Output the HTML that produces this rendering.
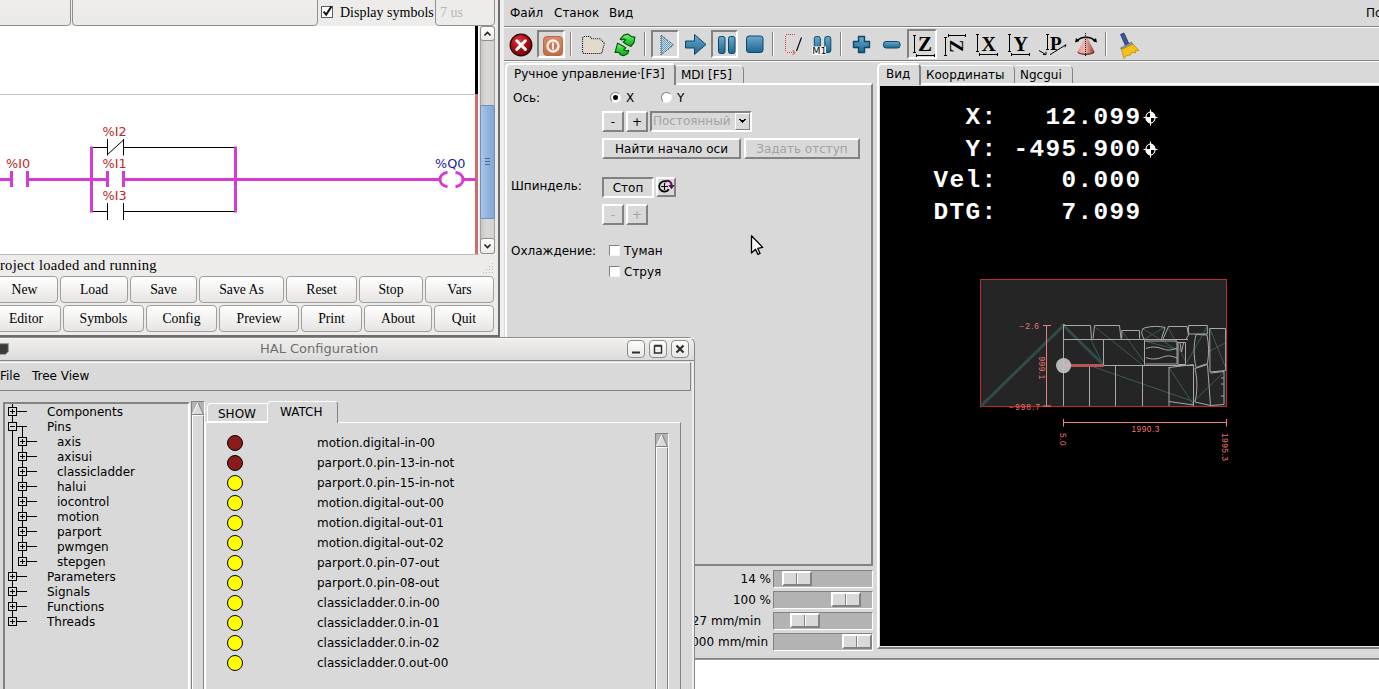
<!DOCTYPE html>
<html lang="ru">
<head>
<meta charset="utf-8">
<title>LinuxCNC</title>
<style>
html,body{margin:0;padding:0;overflow:hidden}
body{width:1379px;height:689px;overflow:hidden;position:relative;background:#d9d9d9;font:12px "DejaVu Sans","Liberation Sans",sans-serif;color:#000}
.a{position:absolute}
.t{position:absolute;white-space:pre;line-height:14px;height:14px}
/* Tk 3d borders */
.rs{position:absolute;box-sizing:border-box;border:2px solid;border-color:#fff #828282 #828282 #fff;background:#d9d9d9}
.sk{position:absolute;box-sizing:border-box;border:2px solid;border-color:#828282 #fff #fff #828282;background:#d9d9d9}
.r1{position:absolute;box-sizing:border-box;border:1px solid;border-color:#fff #828282 #828282 #fff;background:#d9d9d9}
.s1{position:absolute;box-sizing:border-box;border:1px solid;border-color:#828282 #fff #fff #828282;background:#d9d9d9}
.bt{text-align:center;line-height:18px;white-space:pre}
.dis{color:#a3a3a3}
.sep{position:absolute;width:1px;top:32px;height:24px;background:#828282;border-right:1px solid #fff}
.dro{font:bold 24.4px "Liberation Mono",monospace;letter-spacing:1.36px;color:#fff;white-space:pre;line-height:28px;height:28px}
/* GTK */
#lad{position:absolute;left:0;top:0;width:498px;height:335px;background:#edeceb;border-right:2px solid #6f6d6b;border-bottom:2px solid #6f6d6b;font:14px "Liberation Serif",serif;overflow:hidden}
.gb{position:absolute;box-sizing:border-box;height:27px;border:1px solid #a09e9b;border-radius:4px;background:linear-gradient(#ffffff,#f3f2f1 50%,#e6e4e2);text-align:center;font:13.7px "Liberation Serif",serif;line-height:25px;white-space:pre}
.gb span{display:block;line-height:25px}
.ge{position:absolute;box-sizing:border-box;border:1px solid #918f8c;border-radius:4px;background:#edeceb}
/* HAL */
#hal{position:absolute;left:0;top:337px;width:695px;height:352px;background:#d9d9d9;overflow:hidden}
.tr{position:absolute;white-space:pre;line-height:15px;height:15px}
.led{position:absolute;left:227px;width:14px;height:14px;border-radius:50%;border:1px solid #000;background:#ffff00}
.led.r{background:#8b1a1a}
.wl{position:absolute;left:317px;white-space:pre;line-height:15px}
</style>
</head>
<body>

<!-- ================= AXIS window ================= -->
<div id="axis" class="a" style="left:500px;top:0;width:879px;height:689px;background:#d9d9d9;overflow:hidden">
<!--AXIS-CONTENT-->
<!-- window left edge -->
<div class="a" style="left:0;top:0;width:4px;height:660px;background:#efefef"></div>
<!-- menubar -->
<div class="t" style="left:10px;top:6px">Файл</div>
<div class="t" style="left:54px;top:6px">Станок</div>
<div class="t" style="left:109px;top:6px">Вид</div>
<div class="t" style="left:866px;top:6px">Помощь</div>
<div class="a" style="left:4px;top:26px;width:875px;height:1px;background:#828282"></div>
<div class="a" style="left:4px;top:27px;width:875px;height:1px;background:#fff"></div>
<!-- toolbar -->
<div id="tb" class="a" style="left:0;top:0;width:879px;height:62px">
<!--TOOLBAR-->
<div class="sk" style="left:37px;top:30px;width:28px;height:28px"></div>
<div class="sk" style="left:151px;top:30px;width:28px;height:28px"></div>
<div class="sk" style="left:211px;top:30px;width:27px;height:28px"></div>
<div class="sk" style="left:407px;top:29px;width:30px;height:30px"></div>
<div class="sep" style="left:70px"></div><div class="sep" style="left:144px"></div><div class="sep" style="left:272px"></div><div class="sep" style="left:340px"></div><div class="sep" style="left:605px"></div>
<svg class="a" style="left:0;top:28px" width="879" height="32" viewBox="500 28 879 32">
<defs>
 <radialGradient id="gRed" cx="0.4" cy="0.3" r="0.8"><stop offset="0" stop-color="#dc3a42"/><stop offset="0.5" stop-color="#b00c14"/><stop offset="1" stop-color="#5c0408"/></radialGradient>
 <linearGradient id="gOr" x1="0" y1="0" x2="0" y2="1"><stop offset="0" stop-color="#d68c6b"/><stop offset="1" stop-color="#c26b49"/></linearGradient>
 <linearGradient id="gBl" x1="0" y1="0" x2="0" y2="1"><stop offset="0" stop-color="#6aaace"/><stop offset="1" stop-color="#1d6690"/></linearGradient>
 <linearGradient id="gGr" x1="0" y1="0" x2="0" y2="1"><stop offset="0" stop-color="#8af58a"/><stop offset="0.5" stop-color="#2fd03a"/><stop offset="1" stop-color="#0fa81c"/></linearGradient>
 <linearGradient id="gCone" x1="0" y1="0" x2="1" y2="0"><stop offset="0" stop-color="#e89a92"/><stop offset="0.45" stop-color="#f3b8b0"/><stop offset="1" stop-color="#8a3a36"/></linearGradient>
 <pattern id="stip" width="2" height="2" patternUnits="userSpaceOnUse"><rect width="2" height="2" fill="#d9d9d9"/><rect width="1" height="1" fill="#5a9ec6"/><rect x="1" y="1" width="1" height="1" fill="#5a9ec6"/></pattern>
 <pattern id="stipF" width="2" height="2" patternUnits="userSpaceOnUse"><rect width="2" height="2" fill="#d9d9d9"/><rect width="1" height="1" fill="#ecdcc0"/><rect x="1" y="1" width="1" height="1" fill="#ecdcc0"/></pattern>
</defs>
<!-- estop -->
<circle cx="521" cy="45" r="10.800" fill="url(#gRed)" stroke="#2e0204" stroke-width="1.300"/>
<path d="M516.800 40.800l8.600 8.600M525.400 40.800l-8.600 8.600" stroke="#fff" stroke-width="3" stroke-linecap="round"/>
<!-- power -->
<rect x="543.500" y="36.500" width="19" height="19" rx="3.500" fill="url(#gOr)" stroke="#b86844" stroke-width="1"/>
<circle cx="553" cy="46" r="5.500" fill="none" stroke="#fbeee6" stroke-width="2.400"/>
<path d="M553 42.500v7" stroke="#fbeee6" stroke-width="2"/>
<!-- folder (disabled) -->
<path d="M582.500 38l1.500-1.500h6l2 2.300h8l4 4.200v2l-1.500 4.500v2.500l-1.500 1.500h-17l-1.500-1.500z" fill="url(#stipF)" stroke="#000" stroke-width="1.100" stroke-dasharray="1 1.050"/>
<!-- reload -->
<path d="M620.200 39.200L623.700 35.100L627.800 34.100L631.300 36.600L634.900 37.100L633.900 42.700L630.800 46.500L626.300 44.200L623.200 42L625.800 39.700L623.700 38.900L621.700 39.900z" fill="url(#gGr)" stroke="#075a0c" stroke-width="1.200" stroke-linejoin="round"/>
<path d="M615.100 52.400L617.600 43.200L620.700 44.750L625.800 47.800L623.700 49.800L626.300 50.800L628.800 50.300L627.800 53.400L623.700 55.700L620.700 54.900L618.700 52.400z" fill="url(#gGr)" stroke="#075a0c" stroke-width="1.200" stroke-linejoin="round"/>
<!-- play (stippled) -->
<path d="M661 35l12.500 10-12.500 10z" fill="url(#stip)" stroke="#0d3c5c" stroke-width="1" stroke-dasharray="1 1"/>
<!-- step arrow -->
<path d="M685.500 41h9v-6.500l11.500 10-11.500 10v-6.500h-9z" fill="url(#gBl)" stroke="#0f4668" stroke-width="1" stroke-linejoin="round"/>
<!-- pause -->
<rect x="718.500" y="36.500" width="6.500" height="17" rx="2" fill="url(#gBl)" stroke="#0f4668"/>
<rect x="728.500" y="36.500" width="6.500" height="17" rx="2" fill="url(#gBl)" stroke="#0f4668"/>
<!-- stop -->
<rect x="746.500" y="36" width="16.500" height="16.500" rx="2.500" fill="url(#gBl)" stroke="#0f4668"/>
<!-- block delete -->
<path d="M795 34.500h-8.500l-1 1v16l1 1h8" fill="none" stroke="#e43c3c" stroke-width="1" stroke-dasharray="1 1" shape-rendering="crispEdges"/>
<path d="M792.500 50l2.500 2.500-2.500 2.500" fill="none" stroke="#e43c3c" stroke-width="1"/>
<path d="M796.500 51l5-13.500" stroke="#000" stroke-width="1.100"/>
<!-- M1 optional pause -->
<rect x="814.300" y="36.500" width="6" height="16" rx="2" fill="url(#gBl)" stroke="#0f4668"/>
<rect x="824.800" y="36.500" width="6" height="16" rx="2" fill="url(#gBl)" stroke="#0f4668"/>
<rect x="812" y="46.500" width="14" height="8.500" fill="#fff"/>
<text x="812.300" y="54" font-family="DejaVu Sans, Liberation Sans, sans-serif" font-size="9.500" fill="#000">M1</text>
<!-- plus / minus -->
<path d="M858.500 36.500h6v5h5v6h-5v5h-6v-5h-5v-6h5z" fill="url(#gBl)" stroke="#0f4668" stroke-linejoin="round" stroke-width="1.400"/>
<rect x="883.500" y="41.500" width="16.500" height="6.500" rx="2.500" fill="url(#gBl)" stroke="#0f4668"/>
<!-- view Z -->
<g stroke="#000" stroke-width="1" fill="none" shape-rendering="crispEdges">
 <path d="M914.500 35v18M913 35.500h3M913 52.500h3 M916 55.500h19M916.500 54v3M934.500 54v3"/>
 <path d="M945.500 37v19M944 37.500h3M944 55.500h3 M948 35.500h18M948.500 34v3M965.500 34v3"/>
 <path d="M977.500 34v18M976 34.500h3M976 51.500h3 M979 54.500h19M979.500 53v3M997.500 53v3"/>
 <path d="M1009.500 34v18M1008 34.500h3M1008 51.500h3 M1011 54.500h19M1011.500 53v3M1029.500 53v3"/>
 <path d="M1047.500 34v16M1046 34.500h3M1046 49.500h3"/>
</g>
<g stroke="#000" stroke-width="1" fill="none">
 <path d="M1039 50.500l7 4.200 M1046 54.700v-3 M1046 54.700l-3-0.300 M1050 54.700l16-10 M1066 44.700l-1 2.500"/>
</g>
<g font-family="Liberation Serif, serif" font-weight="bold" font-size="21" fill="#000">
 <text x="918" y="51">Z</text>
 <text transform="translate(950.300 39.700) rotate(90)" x="0" y="0" font-size="19">Z</text>
 <text x="981.500" y="50.500" font-size="20">X</text>
 <text x="1013.500" y="50.500" font-size="20">Y</text>
 <text x="1050" y="49.500" font-size="19">P</text>
</g>
<!-- cone -->
<ellipse cx="1086" cy="52" rx="8.500" ry="3" fill="#5a2422"/>
<path d="M1086 35l-8.300 16.500c2 3 14.600 3 16.600 0z" fill="url(#gCone)"/>
<path d="M1085.500 33v24" stroke="#000" stroke-width="1" stroke-dasharray="1 1" shape-rendering="crispEdges"/>
<path d="M1077 41c4-5 14-5 18 0" fill="none" stroke="#000" stroke-width="1.300"/>
<path d="M1075 42.500l1-4.500 3.500 3z M1097 42.500l-1-4.500-3.500 3z" fill="#000"/>
<!-- broom -->
<path d="M1120.500 34.500l3.500-1.500 5 11-3.500 1.800z" fill="#3a55a0" stroke="#22336a" stroke-width="0.800"/>
<path d="M1120.500 48l11-6 1.500 2.500-11 6z" fill="#8a93a8" stroke="#555" stroke-width="0.500"/>
<path d="M1121.500 49.500l11.500-5.500 6 6.500-4 0.500 0.500 2-4-0.500-1 2.500-4 0.500-2.500 3z" fill="#f2c21a" stroke="#b88a08" stroke-width="0.800"/>
</svg>
</div>
<div class="a" style="left:4px;top:60px;width:875px;height:1px;background:#828282"></div>
<div class="a" style="left:4px;top:61px;width:875px;height:1px;background:#fff"></div>

<!-- left notebook -->
<div class="a" style="left:5px;top:83px;width:368px;height:483px;box-sizing:border-box;border:2px solid;border-color:#fff #828282 #828282 #fff"></div>
<!-- tab 1 (selected) -->
<div class="a" style="left:5px;top:63px;width:171px;height:22px;box-sizing:border-box;border:2px solid;border-color:#fff #828282 #d9d9d9 #fff;border-bottom:0;border-radius:5px 5px 0 0;background:#d9d9d9"></div>
<div class="t" style="left:14px;top:67px">Ручное управление·[F3]</div>
<!-- tab 2 -->
<div class="a" style="left:176px;top:65px;width:68px;height:18px;box-sizing:border-box;border:1px solid;border-color:#fff #828282 transparent #d9d9d9;border-bottom:0;border-radius:0 5px 0 0"></div>
<div class="t" style="left:181px;top:68px">MDI [F5]</div>

<!-- Axis row -->
<div class="t" style="left:13px;top:91px">Ось:</div>
<div class="a" style="left:110px;top:92px;width:11px;height:11px;box-sizing:border-box;border-radius:50%;background:#fff;border:1px solid;border-color:#828282 #f4f4f4 #f4f4f4 #828282"></div>
<div class="a" style="left:113px;top:95px;width:5px;height:5px;border-radius:50%;background:#000"></div>
<div class="t" style="left:126px;top:91px">X</div>
<div class="a" style="left:161px;top:92px;width:11px;height:11px;box-sizing:border-box;border-radius:50%;background:#fff;border:1px solid;border-color:#828282 #f4f4f4 #f4f4f4 #828282"></div>
<div class="t" style="left:177px;top:91px">Y</div>
<!-- jog row -->
<div class="rs bt" style="left:102px;top:111px;width:22px;height:21px">-</div>
<div class="rs bt" style="left:126px;top:111px;width:22px;height:21px">+</div>
<div class="sk" style="left:150px;top:111px;width:102px;height:21px"></div>
<div class="t dis" style="left:153px;top:114px">Постоянный</div>
<div class="r1" style="left:235px;top:113px;width:15px;height:17px"></div>
<svg class="a" style="left:235px;top:113px" width="15" height="17"><path d="M4 6.500h7M5 7.500h5M6 8.500h3M7 9.500h1" stroke="#000" stroke-width="1" fill="none" shape-rendering="crispEdges"/><path d="M6 6.500h3" stroke="#d9d9d9" stroke-width="1" shape-rendering="crispEdges"/></svg>
<!-- home row -->
<div class="rs bt" style="left:102px;top:138px;width:139px;height:21px">Найти начало оси</div>
<div class="rs bt dis" style="left:244px;top:138px;width:116px;height:21px">Задать отступ</div>
<!-- spindle -->
<div class="t" style="left:11px;top:179px">Шпиндель:</div>
<div class="sk bt" style="left:102px;top:177px;width:52px;height:21px">Стоп</div>
<div class="rs" style="left:156px;top:177px;width:20px;height:20px"></div>
<svg class="a" style="left:156px;top:177px" width="20" height="20" viewBox="0 0 20 20"><path d="M10.500 4.600A5.200 5.200 0 1 0 12.800 12.200" fill="none" stroke="#000" stroke-width="1.800"/><path d="M8.500 6v7M5 9.500h7" stroke="#000" stroke-width="1.100"/><path d="M9.500 4.200c3.500-1.200 6.300 1 6.200 4.500" fill="none" stroke="#5a0a5a" stroke-width="2"/><path d="M12.300 8h6.400l-3.200 4.300z" fill="#5a0a5a"/></svg>
<div class="rs bt dis" style="left:102px;top:204px;width:22px;height:21px">-</div>
<div class="rs bt dis" style="left:126px;top:204px;width:22px;height:21px">+</div>
<!-- coolant -->
<div class="t" style="left:11px;top:244px">Охлаждение:</div>
<div class="a" style="left:109px;top:245px;width:11px;height:11px;box-sizing:border-box;background:#fff;border:1px solid;border-color:#828282 #f4f4f4 #f4f4f4 #828282"></div>
<div class="t" style="left:124px;top:244px">Туман</div>
<div class="a" style="left:109px;top:266px;width:11px;height:11px;box-sizing:border-box;background:#fff;border:1px solid;border-color:#828282 #f4f4f4 #f4f4f4 #828282"></div>
<div class="t" style="left:124px;top:265px">Струя</div>
<!-- mouse cursor -->
<svg class="a" style="left:250px;top:235px" width="15" height="22" viewBox="0 0 15 22"><path d="M1.500 0.700L1.500 18L5.500 14.300L7.900 19.400L10.100 18.400L7.800 13.400L12.700 12.400Z" fill="#fff" stroke="#000" stroke-width="1.300" stroke-linejoin="round"/></svg>

<!-- sliders -->
<div class="t" style="left:141px;top:572px;width:130px;text-align:right">14 %</div>
<div class="s1" style="left:273px;top:570px;width:100px;height:18px;background:#b3b3b3"></div>
<div class="rs" style="left:282px;top:571px;width:30px;height:15px"></div><div class="a" style="left:296px;top:573px;width:1px;height:11px;background:#828282;border-right:1px solid #fff"></div>
<div class="t" style="left:141px;top:593px;width:130px;text-align:right">100 %</div>
<div class="s1" style="left:273px;top:591px;width:100px;height:18px;background:#b3b3b3"></div>
<div class="rs" style="left:331px;top:592px;width:30px;height:15px"></div><div class="a" style="left:345px;top:594px;width:1px;height:11px;background:#828282;border-right:1px solid #fff"></div>
<div class="t" style="left:131px;top:614px;width:130px;text-align:right">1227 mm/min</div>
<div class="s1" style="left:273px;top:612px;width:100px;height:18px;background:#b3b3b3"></div>
<div class="rs" style="left:290px;top:613px;width:30px;height:15px"></div><div class="a" style="left:304px;top:615px;width:1px;height:11px;background:#828282;border-right:1px solid #fff"></div>
<div class="t" style="left:138px;top:635px;width:130px;text-align:right">6000 mm/min</div>
<div class="s1" style="left:273px;top:633px;width:100px;height:18px;background:#b3b3b3"></div>
<div class="rs" style="left:342px;top:634px;width:30px;height:15px"></div><div class="a" style="left:356px;top:636px;width:1px;height:11px;background:#828282;border-right:1px solid #fff"></div>

<!-- right notebook -->
<div class="a" style="left:377px;top:83px;width:502px;height:566px;box-sizing:border-box;border:2px solid;border-color:#fff #828282 #828282 #fff;border-right:0"></div>
<div class="a" style="left:377px;top:63px;width:44px;height:22px;box-sizing:border-box;border:2px solid;border-color:#fff #828282 #d9d9d9 #fff;border-bottom:0;border-radius:5px 5px 0 0;background:#d9d9d9"></div>
<div class="t" style="left:386px;top:67px">Вид</div>
<div class="a" style="left:421px;top:65px;width:94px;height:18px;box-sizing:border-box;border:1px solid;border-color:#fff #828282 transparent #d9d9d9;border-bottom:0;border-radius:0 5px 0 0"></div>
<div class="t" style="left:426px;top:68px">Координаты</div>
<div class="a" style="left:515px;top:65px;width:58px;height:18px;box-sizing:border-box;border:1px solid;border-color:#fff #828282 transparent #d9d9d9;border-bottom:0;border-radius:0 5px 0 0"></div>
<div class="t" style="left:520px;top:68px">Ngcgui</div>
<!-- GL view -->
<div id="gl" class="a" style="left:380px;top:86px;width:499px;height:560px;background:#000;overflow:hidden">
<!--GL-->
<div class="a dro" style="left:53.500px;top:17.500px">  X:   12.099</div>
<div class="a dro" style="left:53.500px;top:49.500px">  Y: -495.900</div>
<div class="a dro" style="left:53.500px;top:81.300px">Vel:    0.000</div>
<div class="a dro" style="left:53.500px;top:112.700px">DTG:    7.099</div>
<svg class="a" style="left:0;top:0" width="499" height="560" viewBox="880 86 499 560">
<!-- homed markers -->
<g stroke="#fff" fill="none" stroke-width="1">
 <ellipse cx="1150.500" cy="117.5" rx="4.800" ry="5.800" fill="#fff" stroke="none"/><path d="M1150.500 117.5v-5.300a4.300 5.300 0 0 0-4.300 5.300z M1150.500 117.5v5.300a4.300 5.300 0 0 0 4.300-5.300z" fill="#000" stroke="none"/><ellipse cx="1150.500" cy="117.5" rx="4.600" ry="5.600" fill="none" stroke="#fff" stroke-width="1"/><path d="M1150.500 109.5v16M1143.500 117.5h14"/>
 <ellipse cx="1150.500" cy="149.5" rx="4.800" ry="5.800" fill="#fff" stroke="none"/><path d="M1150.500 149.5v-5.300a4.300 5.300 0 0 0-4.300 5.300z M1150.500 149.5v5.300a4.300 5.300 0 0 0 4.300-5.300z" fill="#000" stroke="none"/><ellipse cx="1150.500" cy="149.5" rx="4.600" ry="5.600" fill="none" stroke="#fff" stroke-width="1"/><path d="M1150.500 141.5v16M1143.500 149.5h14"/>
</g>
<!-- machine limits box -->
<rect x="980.500" y="279.500" width="246" height="127" fill="#252525" stroke="#c0282c" stroke-width="1"/>
<!-- rapids (teal) -->
<g stroke="#33494a" fill="none" stroke-linecap="round">
 <path d="M981 406L1063.500 325.500L1103 364.500" stroke-width="3"/>
 <g stroke-width="1" stroke="#3a5a5b">
 <path d="M1094.200 326.300L1142.800 365.200 M1090.600 339L1101.400 361.500 M1090.700 365.900L1192 401 M1169 367.500L1193 404 M1141.800 328L1177 350 M1165 327L1143 340 M1168 327L1186 362 M1207 327L1187 362 M1192 403L1224 372 M1210 329L1225 366 M1225 343L1210 351 M1145 341L1178 350 M1122 331L1144 362"/>
 </g>
</g>
<!-- program geometry -->
<g stroke="#a8a8a8" stroke-width="1" fill="none" stroke-linejoin="round">
 <path d="M1063.500 325.500V406 M1063.500 339.500H1188 M1063.500 365.500H1193.500"/>
 <path d="M1089.500 365.500V406 M1115.500 365.500V406 M1142.500 365.500V406 M1169 367V406 M1193.500 365V406"/>
 <path d="M1063.500 325.500H1090.500L1091.500 338.700 M1093 338.700L1094.500 325.500H1119.500L1121 338.700"/>
 <path d="M1121.800 338.700V330.500H1139.500V338.700"/>
 <path d="M1144 339C1140.500 333 1141 328.500 1146 327.500C1152 326 1160 326 1165 327.500L1161.500 338.700"/>
 <path d="M1163 339L1168.500 326.500H1187L1188.500 335L1186 339.500"/>
 <path d="M1188.600 325.500H1207.300V334H1188.600z"/>
 <path d="M1209.700 328.500H1225.600V370.500L1210 372z"/>
 <path d="M1103.500 339.500V365.500 M1144.500 339.500V365.500"/>
 <path d="M1145.500 341H1177V364H1145.500"/>
 <path d="M1146 348.500C1152 346 1158 347 1163 349C1168 351 1172 350 1177 348 M1146 357.500C1152 360 1158 359 1163 357C1168 355 1172 356 1177 358"/>
 <path d="M1178 342.500H1185.500V364.500H1178z M1180 343L1181.500 352L1183.500 343"/>
 <path d="M1196 334.500C1193.500 345 1193.500 356 1196 367.500L1207.500 363.500C1209 354 1209 344 1207 335z"/>
 <path d="M1169 367.500L1193.500 364.500 M1169 401.500L1193.500 405"/>
 <path d="M1195 368.500L1207.500 364.500L1210.500 405.500L1195 402C1197.500 391 1197.500 380 1195 368.500z"/>
 <path d="M1210.500 373L1224 371.500V404.500L1210.500 405.500 M1224 378h-3 M1224 384h-3 M1224 396h-3"/>
</g>
<!-- feed move highlight + tool -->
<path d="M1063.500 365.500H1103.500" stroke="#b75656" stroke-width="3.200"/>
<circle cx="1063.600" cy="365.600" r="7.600" fill="#c3c3c3" fill-opacity="0.920"/>
<path d="M1062.500 324.500h2.500" stroke="#4cd038" stroke-width="1"/>
<!-- extents / dimensions -->
<g stroke="#ec8080" stroke-width="1" fill="none">
 <path d="M1046.500 325.500V406 M1043 325.500h8 M1043 406h8"/>
 <path d="M1063.500 422.500H1226 M1063.500 419v7.500 M1226.500 419v7.500"/>
</g>
<g font-family="Liberation Sans, DejaVu Sans, sans-serif" font-size="8.300" fill="#ee7474" letter-spacing="1">
 <text x="1019.500" y="329">−2.6</text>
 <text x="1009.300" y="410">−998.7</text>
 <text x="1131.500" y="432" letter-spacing="0.500">1990.3</text>
 <text transform="translate(1038.500 356.500) rotate(90)" letter-spacing="0.500">999.1</text>
 <text transform="translate(1059.800 433) rotate(90)" letter-spacing="0.500">5.0</text>
 <text transform="translate(1222 433) rotate(90)" letter-spacing="0.500">1995.3</text>
</g>
</svg>
</div>
<div class="a" style="left:380px;top:646px;width:499px;height:1px;background:#ececec"></div>
<!-- bottom: separator + white text area -->
<div class="a" style="left:4px;top:658px;width:875px;height:1px;background:#828282"></div>
<div class="a" style="left:4px;top:659px;width:875px;height:1px;background:#9a9a9a"></div>
<div class="a" style="left:0;top:660px;width:879px;height:29px;background:#fff"></div>
</div>

<!-- ================= ClassicLadder window ================= -->
<div id="lad">
<!--LAD-CONTENT-->
<!-- top row -->
<div class="ge" style="left:-6px;top:-3px;width:77px;height:29px;background:linear-gradient(#efeeed,#ebeae8)"></div>
<div class="ge" style="left:72px;top:-3px;width:246px;height:29px;background:linear-gradient(#efeeed,#ebeae8)"></div>
<div class="a" style="left:321px;top:6px;width:12px;height:12px;box-sizing:border-box;border:1px solid #5e5d5b;background:#fff"></div>
<svg class="a" style="left:321px;top:4px" width="14" height="14" viewBox="0 0 14 14"><path d="M2.6 7.6 L5.2 10.6 L10.6 2.2" fill="none" stroke="#111" stroke-width="2"/></svg>
<div class="t" style="left:340px;top:5px;font-size:14px;line-height:15px">Display symbols</div>
<div class="ge" style="left:435px;top:-3px;width:60px;height:29px"></div>
<div class="t" style="left:440px;top:5px;font-size:14px;line-height:15px;color:#b9b7b4">7 us</div>
<!-- canvas -->
<div class="a" style="left:0;top:26px;width:479px;height:228px;background:#fff"></div>
<div class="a" style="left:0;top:94px;width:475px;height:1px;background:#c4c4c4"></div>
<div class="a" style="left:0;top:254px;width:479px;height:1px;background:#bdbbb8"></div>
<div class="a" style="left:475px;top:26px;width:3px;height:68px;background:#000"></div>
<div class="a" style="left:475px;top:94px;width:3px;height:160px;background:#d36a6a"></div>
<!-- ladder rung -->
<svg class="a" style="left:0;top:110px" width="480" height="125" viewBox="0 110 480 125">
 <g stroke="#d63ad6" stroke-width="3" fill="none">
  <path d="M0 179.5H10 M29 179.5H106 M125 179.5H440 M463.5 179.5H476"/>
  <path d="M11.5 171V187 M27.5 171V187 M107.5 171V187 M123.5 171V187"/>
  <path d="M91.5 146.5V212.5 M235.5 146.5V212.5"/>
  <path d="M447.5 172.3 C437.5 174 437.5 185 447.5 186.7"/>
  <path d="M455.5 172.3 C465.5 174 465.5 185 455.5 186.7"/>
 </g>
 <g stroke="#000" stroke-width="1" fill="none">
  <path d="M93 147.5H107.5 M123.5 147.5H234 M107.5 139V155.5 M123.5 139V155.5 M107.5 154.5L123.5 140"/>
  <path d="M93 211.5H107.5 M123.5 211.5H234 M107.5 203V220 M123.5 203V220"/>
 </g>
 <g font-family="DejaVu Sans, Liberation Sans, sans-serif" font-size="12.800" fill="#bd2626">
  <text x="6" y="168">%I0</text><text x="102.5" y="136">%I2</text><text x="102.5" y="168">%I1</text><text x="102.5" y="200">%I3</text>
  <text x="435" y="168" fill="#1c1c9c">%Q0</text>
 </g>
</svg>
<!-- scrollbar -->
<div class="a" style="left:480px;top:26px;width:15px;height:228px;box-sizing:border-box;border:1px solid #a3a19e;border-radius:3px;background:linear-gradient(90deg,#c6c5c3,#d9d8d6 40%,#d4d3d1)"></div>
<div class="a" style="left:480px;top:26px;width:15px;height:15px;box-sizing:border-box;border:1px solid #908e8b;border-radius:3px;background:linear-gradient(#fff,#eceae8)"></div>
<svg class="a" style="left:480px;top:26px" width="15" height="15"><path d="M4.5 9.5L7.5 6.5L10.5 9.5" fill="none" stroke="#222" stroke-width="1.6"/></svg>
<div class="a" style="left:480px;top:238px;width:15px;height:16px;box-sizing:border-box;border:1px solid #908e8b;border-radius:3px;background:linear-gradient(#fff,#eceae8)"></div>
<svg class="a" style="left:480px;top:238px" width="15" height="16"><path d="M4.5 6.5L7.5 9.5L10.5 6.5" fill="none" stroke="#222" stroke-width="1.6"/></svg>
<div class="a" style="left:480px;top:105px;width:15px;height:114px;box-sizing:border-box;border:1px solid #6f8fbc;border-radius:2px;background:linear-gradient(90deg,#a9c4e6,#8fb1dd 60%,#83a6d5)"></div>
<div class="a" style="left:485px;top:158px;width:5px;height:1px;background:#4a6a98;box-shadow:0 3px 0 #4a6a98,0 6px 0 #4a6a98"></div>
<!-- status -->
<div class="t" style="left:-8.500px;top:257px;font-size:14.600px;letter-spacing:0.300px;line-height:16px">Project loaded and running</div>
<svg class="a" style="left:483px;top:262px" width="12" height="12"><g fill="#b9b7b4"><rect x="9" y="1" width="1" height="1"/><rect x="6" y="4" width="1" height="1"/><rect x="9" y="4" width="1" height="1"/><rect x="3" y="7" width="1" height="1"/><rect x="6" y="7" width="1" height="1"/><rect x="9" y="7" width="1" height="1"/><rect x="0" y="10" width="1" height="1"/><rect x="3" y="10" width="1" height="1"/><rect x="6" y="10" width="1" height="1"/><rect x="9" y="10" width="1" height="1"/></g></svg>
<!-- buttons row1 -->
<div class="gb" style="left:-10px;top:276px;width:68px"><span style="padding-left:1px">New</span></div>
<div class="gb" style="left:60px;top:276px;width:68px">Load</div>
<div class="gb" style="left:130px;top:276px;width:67px">Save</div>
<div class="gb" style="left:199px;top:276px;width:85px">Save As</div>
<div class="gb" style="left:286px;top:276px;width:71px">Reset</div>
<div class="gb" style="left:359px;top:276px;width:64px">Stop</div>
<div class="gb" style="left:425px;top:276px;width:69px">Vars</div>
<!-- buttons row2 -->
<div class="gb" style="left:-10px;top:305px;width:71px"><span style="padding-left:1px">Editor</span></div>
<div class="gb" style="left:63px;top:305px;width:81px">Symbols</div>
<div class="gb" style="left:146px;top:305px;width:71px">Config</div>
<div class="gb" style="left:219px;top:305px;width:80px">Preview</div>
<div class="gb" style="left:301px;top:305px;width:61px">Print</div>
<div class="gb" style="left:364px;top:305px;width:68px">About</div>
<div class="gb" style="left:434px;top:305px;width:60px">Quit</div>
</div>

<!-- ================= HAL Configuration window ================= -->
<div id="hal">
<!--HAL-CONTENT-->
<div class="a" style="left:-8px;top:0;width:703px;height:24px;box-sizing:border-box;border:1px solid #8d8b88;border-bottom:1px solid #8a8886;border-radius:7px 7px 0 0;background:linear-gradient(#efeeed,#e9e8e6 40%,#dddbd9)"></div>
<div class="a" style="left:-7px;top:1px;width:701px;height:1px;background:#f8f8f7;border-radius:6px 6px 0 0"></div>
<div class="t" style="left:260px;top:4px;font-size:13px;line-height:16px;height:16px;color:#6e6e6e">HAL Configuration</div>
<svg class="a" style="left:0;top:5px" width="10" height="14" viewBox="0 0 10 14"><path d="M0 1.500h8.500v8l-3 3h-5.500" fill="#4a4a4a" stroke="#9a9a9a" stroke-width="1"/><path d="M0 3h7v6l-2.500 2.500h-4.500z" fill="#3a3a3a"/></svg>
<div class="a" style="left:627px;top:3px;width:18px;height:18px;box-sizing:border-box;border:1px solid #8f8d8a;border-radius:4px;background:linear-gradient(#fdfdfd,#e8e7e5)"></div>
<div class="a" style="left:649px;top:3px;width:18px;height:18px;box-sizing:border-box;border:1px solid #8f8d8a;border-radius:4px;background:linear-gradient(#fdfdfd,#e8e7e5)"></div>
<div class="a" style="left:671px;top:3px;width:18px;height:18px;box-sizing:border-box;border:1px solid #8f8d8a;border-radius:4px;background:linear-gradient(#fdfdfd,#e8e7e5)"></div>
<svg class="a" style="left:627px;top:3px" width="18" height="18"><path d="M5 12.500h8" stroke="#2e2e2e" stroke-width="2"/></svg>
<svg class="a" style="left:649px;top:3px" width="18" height="18"><path d="M5.500 6h7v7h-7z M5.500 5.500h7" stroke="#2e2e2e" stroke-width="1.400" fill="none"/></svg>
<svg class="a" style="left:671px;top:3px" width="18" height="18"><path d="M5.500 5.500l7 7M12.500 5.500l-7 7" stroke="#2e2e2e" stroke-width="2.200"/></svg>
<div class="a" style="left:692px;top:24px;width:2px;height:330px;background:#efeeed"></div>
<div class="a" style="left:694px;top:6px;width:1px;height:350px;background:#8a8886"></div>
<div class="r1" style="left:-3px;top:25px;width:694px;height:29px"></div>
<div class="t" style="left:0px;top:32px">File</div>
<div class="t" style="left:32px;top:32px">Tree View</div>
<div class="a" style="left:3px;top:65px;width:187px;height:300px;box-sizing:border-box;border:2px solid;border-color:#828282 #fff #fff #828282"></div>
<div class="tr" style="left:47px;top:68px">Components</div>
<div class="tr" style="left:47px;top:83px">Pins</div>
<div class="tr" style="left:57px;top:98px">axis</div>
<div class="tr" style="left:57px;top:113px">axisui</div>
<div class="tr" style="left:57px;top:128px">classicladder</div>
<div class="tr" style="left:57px;top:143px">halui</div>
<div class="tr" style="left:57px;top:158px">iocontrol</div>
<div class="tr" style="left:57px;top:173px">motion</div>
<div class="tr" style="left:57px;top:188px">parport</div>
<div class="tr" style="left:57px;top:203px">pwmgen</div>
<div class="tr" style="left:57px;top:218px">stepgen</div>
<div class="tr" style="left:47px;top:233px">Parameters</div>
<div class="tr" style="left:47px;top:248px">Signals</div>
<div class="tr" style="left:47px;top:263px">Functions</div>
<div class="tr" style="left:47px;top:278px">Threads</div>
<svg class="a" style="left:0;top:65px" width="190" height="290" viewBox="0 402 190 290"><g stroke="#000" stroke-width="1" fill="none" shape-rendering="crispEdges"><path d="M12.500 404V621 M22.500 426V561"/><path d="M17 411.5H27"/><rect x="8.5" y="407.5" width="8" height="8" fill="#d9d9d9"/><path d="M10 411.5H15"/><path d="M12.5 409V414"/><path d="M17 426.5H27"/><rect x="8.5" y="422.5" width="8" height="8" fill="#d9d9d9"/><path d="M10 426.5H15"/><path d="M27 441.5H37"/><rect x="18.5" y="437.5" width="8" height="8" fill="#d9d9d9"/><path d="M20 441.5H25"/><path d="M22.5 439V444"/><path d="M27 456.5H37"/><rect x="18.5" y="452.5" width="8" height="8" fill="#d9d9d9"/><path d="M20 456.5H25"/><path d="M22.5 454V459"/><path d="M27 471.5H37"/><rect x="18.5" y="467.5" width="8" height="8" fill="#d9d9d9"/><path d="M20 471.5H25"/><path d="M22.5 469V474"/><path d="M27 486.5H37"/><rect x="18.5" y="482.5" width="8" height="8" fill="#d9d9d9"/><path d="M20 486.5H25"/><path d="M22.5 484V489"/><path d="M27 501.5H37"/><rect x="18.5" y="497.5" width="8" height="8" fill="#d9d9d9"/><path d="M20 501.5H25"/><path d="M22.5 499V504"/><path d="M27 516.5H37"/><rect x="18.5" y="512.5" width="8" height="8" fill="#d9d9d9"/><path d="M20 516.5H25"/><path d="M22.5 514V519"/><path d="M27 531.5H37"/><rect x="18.5" y="527.5" width="8" height="8" fill="#d9d9d9"/><path d="M20 531.5H25"/><path d="M22.5 529V534"/><path d="M27 546.5H37"/><rect x="18.5" y="542.5" width="8" height="8" fill="#d9d9d9"/><path d="M20 546.5H25"/><path d="M22.5 544V549"/><path d="M27 561.5H37"/><rect x="18.5" y="557.5" width="8" height="8" fill="#d9d9d9"/><path d="M20 561.5H25"/><path d="M22.5 559V564"/><path d="M17 576.5H27"/><rect x="8.5" y="572.5" width="8" height="8" fill="#d9d9d9"/><path d="M10 576.5H15"/><path d="M12.5 574V579"/><path d="M17 591.5H27"/><rect x="8.5" y="587.5" width="8" height="8" fill="#d9d9d9"/><path d="M10 591.5H15"/><path d="M12.5 589V594"/><path d="M17 606.5H27"/><rect x="8.5" y="602.5" width="8" height="8" fill="#d9d9d9"/><path d="M10 606.5H15"/><path d="M12.5 604V609"/><path d="M17 621.5H27"/><rect x="8.5" y="617.5" width="8" height="8" fill="#d9d9d9"/><path d="M10 621.5H15"/><path d="M12.5 619V624"/></g></svg>
<div class="s1" style="left:191px;top:64px;width:14px;height:300px;background:#b3b3b3"></div>
<div class="a" style="left:192px;top:78px;width:12px;height:290px;box-sizing:border-box;border:1px solid;border-color:#fff #828282 #828282 #fff;background:#d9d9d9"></div>
<svg class="a" style="left:192px;top:65px" width="12" height="13"><path d="M6 0.500L11.500 12.500H0.500z" fill="#d9d9d9"/><path d="M6 0.500L0.500 12.500" stroke="#fff" fill="none"/><path d="M6 0.500L11.500 12.500H0.500" stroke="#828282" fill="none"/></svg>
<div class="a" style="left:205px;top:85px;width:476px;height:300px;box-sizing:border-box;border:1px solid;border-color:#fff #828282 #828282 #fff"></div>
<div class="a" style="left:207px;top:66px;width:61px;height:19px;box-sizing:border-box;border:1px solid;border-color:#fff #d9d9d9 #fff #fff;border-radius:4px 0 0 0"></div>
<div class="t" style="left:218px;top:70px">SHOW</div>
<div class="a" style="left:267px;top:64px;width:71px;height:22px;box-sizing:border-box;border:1px solid;border-color:#fff #828282 #d9d9d9 #fff;border-bottom:0;border-radius:4px 4px 0 0;background:#d9d9d9"></div>
<div class="t" style="left:280px;top:68px">WATCH</div>
<div class="led r" style="top:98px"></div><div class="wl" style="top:99px">motion.digital-in-00</div>
<div class="led r" style="top:118px"></div><div class="wl" style="top:119px">parport.0.pin-13-in-not</div>
<div class="led" style="top:138px"></div><div class="wl" style="top:139px">parport.0.pin-15-in-not</div>
<div class="led" style="top:158px"></div><div class="wl" style="top:159px">motion.digital-out-00</div>
<div class="led" style="top:178px"></div><div class="wl" style="top:179px">motion.digital-out-01</div>
<div class="led" style="top:198px"></div><div class="wl" style="top:199px">motion.digital-out-02</div>
<div class="led" style="top:218px"></div><div class="wl" style="top:219px">parport.0.pin-07-out</div>
<div class="led" style="top:238px"></div><div class="wl" style="top:239px">parport.0.pin-08-out</div>
<div class="led" style="top:258px"></div><div class="wl" style="top:259px">classicladder.0.in-00</div>
<div class="led" style="top:278px"></div><div class="wl" style="top:279px">classicladder.0.in-01</div>
<div class="led" style="top:298px"></div><div class="wl" style="top:299px">classicladder.0.in-02</div>
<div class="led" style="top:318px"></div><div class="wl" style="top:319px">classicladder.0.out-00</div>
<div class="s1" style="left:655px;top:96px;width:14px;height:300px;background:#b3b3b3"></div>
<div class="a" style="left:656px;top:110px;width:12px;height:290px;box-sizing:border-box;border:1px solid;border-color:#fff #828282 #828282 #fff;background:#d9d9d9"></div>
<svg class="a" style="left:656px;top:97px" width="12" height="13"><path d="M6 0.500L11.500 12.500H0.500z" fill="#d9d9d9"/><path d="M6 0.500L0.500 12.500" stroke="#fff" fill="none"/><path d="M6 0.500L11.500 12.500H0.500" stroke="#828282" fill="none"/></svg>
</div>

</body>
</html>
